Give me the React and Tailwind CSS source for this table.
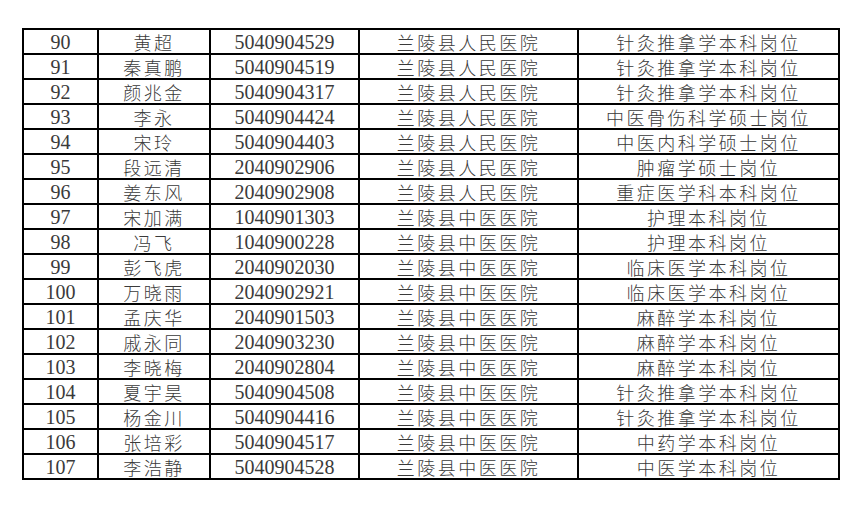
const rows = [
  ['90', '黄超', '5040904529', '兰陵县人民医院', '针灸推拿学本科岗位'],
  ['91', '秦真鹏', '5040904519', '兰陵县人民医院', '针灸推拿学本科岗位'],
  ['92', '颜兆金', '5040904317', '兰陵县人民医院', '针灸推拿学本科岗位'],
  ['93', '李永', '5040904424', '兰陵县人民医院', '中医骨伤科学硕士岗位'],
  ['94', '宋玲', '5040904403', '兰陵县人民医院', '中医内科学硕士岗位'],
  ['95', '段远清', '2040902906', '兰陵县人民医院', '肿瘤学硕士岗位'],
  ['96', '姜东风', '2040902908', '兰陵县人民医院', '重症医学科本科岗位'],
  ['97', '宋加满', '1040901303', '兰陵县中医医院', '护理本科岗位'],
  ['98', '冯飞', '1040900228', '兰陵县中医医院', '护理本科岗位'],
  ['99', '彭飞虎', '2040902030', '兰陵县中医医院', '临床医学本科岗位'],
  ['100', '万晓雨', '2040902921', '兰陵县中医医院', '临床医学本科岗位'],
  ['101', '孟庆华', '2040901503', '兰陵县中医医院', '麻醉学本科岗位'],
  ['102', '戚永同', '2040903230', '兰陵县中医医院', '麻醉学本科岗位'],
  ['103', '李晓梅', '2040902804', '兰陵县中医医院', '麻醉学本科岗位'],
  ['104', '夏宇昊', '5040904508', '兰陵县中医医院', '针灸推拿学本科岗位'],
  ['105', '杨金川', '5040904416', '兰陵县中医医院', '针灸推拿学本科岗位'],
  ['106', '张培彩', '5040904517', '兰陵县中医医院', '中药学本科岗位'],
  ['107', '李浩静', '5040904528', '兰陵县中医医院', '中医学本科岗位'],
]

const num = "font-['Liberation_Serif',serif] text-[20px]"
const cjk = "font-['Noto_Sans_CJK_SC',sans-serif] text-[18px] tracking-[2.5px] font-light"

export default function App() {
  return (
    <div className="w-[852px] h-[512px] bg-white pt-[28px] pl-[22px]">
      <table className="table-fixed border-collapse border-2 border-black text-[#3a3a3a] w-[816px]">
        <colgroup>
          <col className="w-[75px]" />
          <col className="w-[112px]" />
          <col className="w-[149px]" />
          <col className="w-[219px]" />
          <col className="w-[261px]" />
        </colgroup>
        <tbody>
          {rows.map((r) => (
            <tr key={r[0]} className="h-[25px]">
              <td className={`border-2 border-black text-center leading-none p-0 ${num}`}>{r[0]}</td>
              <td className={`border-2 border-black text-center leading-none p-0 ${cjk}`}>{r[1]}</td>
              <td className={`border-2 border-black text-center leading-none p-0 ${num}`}>{r[2]}</td>
              <td className={`border-2 border-black text-center leading-none p-0 ${cjk}`}>{r[3]}</td>
              <td className={`border-2 border-black text-center leading-none p-0 ${cjk}`}>{r[4]}</td>
            </tr>
          ))}
        </tbody>
      </table>
    </div>
  )
}
